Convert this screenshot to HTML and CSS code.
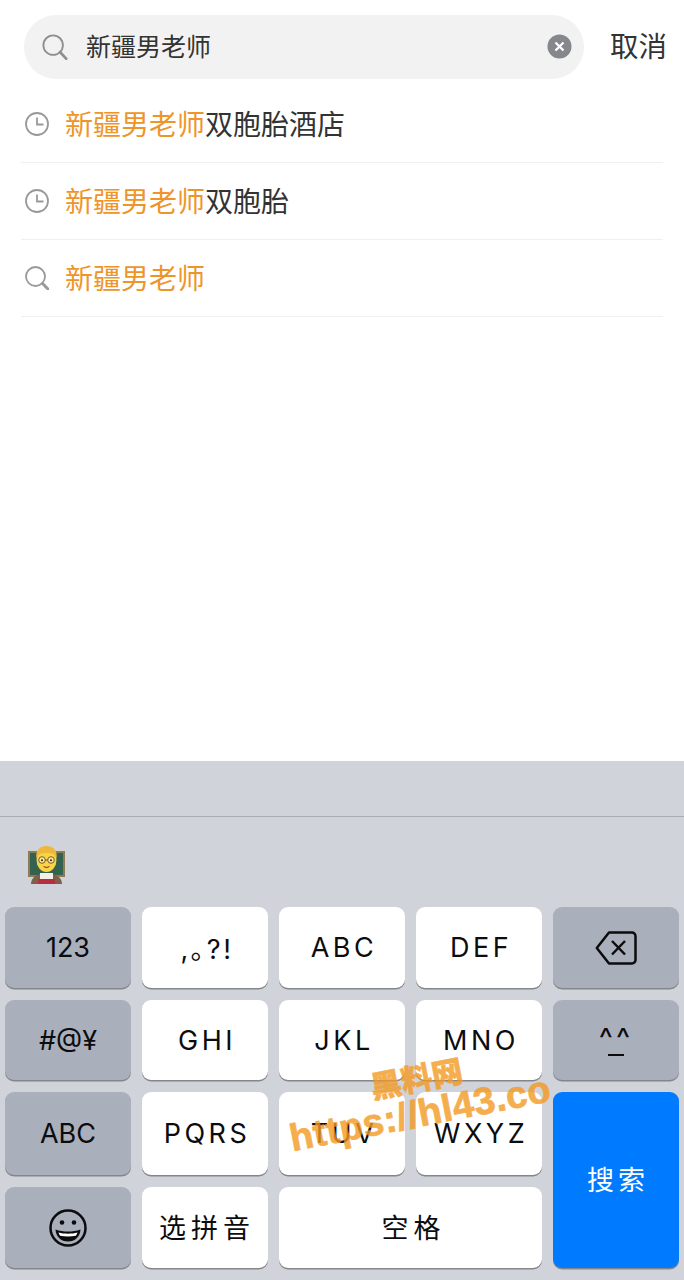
FILE: index.html
```html
<!DOCTYPE html>
<html lang="zh-CN">
<head>
    <meta charset="UTF-8">
    <meta name="viewport" content="width=device-width, initial-scale=1.0">
    <title>搜索</title>
    <link rel="stylesheet" href="styles.css">
</head>
<body>
    <div class="screen">
        <header class="search-head">
            <div class="search-bar">
                <svg class="search-icon" viewBox="0 0 28 28"><circle cx="12" cy="12" r="10.5"/><path class="handle" d="M19.5 19.5 26 26.5"/></svg>
                <span class="search-text">新疆男老师</span>
                <svg class="clear-icon" viewBox="0 0 26 26"><circle cx="13" cy="13" r="12.5"/><path d="M8.8 8.8 17.2 17.2M17.2 8.8 8.8 17.2"/></svg>
            </div>
            <span class="cancel">取消</span>
        </header>

        <ul class="results">
            <li class="result">
                <svg class="result-icon" viewBox="0 0 24 24"><circle cx="12" cy="12" r="11"/><path d="M12 5.5V12.5H18.5"/></svg>
                <span><em>新疆男老师</em>双胞胎酒店</span>
            </li>
            <li class="result">
                <svg class="result-icon" viewBox="0 0 24 24"><circle cx="12" cy="12" r="11"/><path d="M12 5.5V12.5H18.5"/></svg>
                <span><em>新疆男老师</em>双胞胎</span>
            </li>
            <li class="result">
                <svg class="result-icon" viewBox="0 0 24 24"><circle cx="10.5" cy="10.5" r="9.5"/><path class="handle" d="M17.5 17.5 23.5 23.5"/></svg>
                <span><em>新疆男老师</em></span>
            </li>
        </ul>

        <section class="keyboard">
            <div class="kb-top"></div>
            <div class="kb-candidates">
                <svg class="teacher" viewBox="0 0 38 38">
                    <rect x="0" y="5" width="37" height="26" fill="#8d7b55"/>
                    <rect x="2" y="7" width="33" height="22" fill="#35614f"/>
                    <path d="M3 38C3 31 10 27 18.500 27s15.500 4 15.500 11z" fill="#7d6047"/>
                    <path d="M12 38V27h13v11z" fill="#f3efe9"/>
                    <path d="M10 38V33h17v5z" fill="#b5303f"/>
                    <ellipse cx="18.500" cy="14" rx="10" ry="12" fill="#f8d548"/>
                    <path d="M8.500 13C7 4 12 0 18.500 0S30 4 28.500 13c-1-4-3-6-10-6S9.500 9 8.500 13z" fill="#eeb93a"/>
                    <circle cx="14" cy="14" r="3.300" fill="#fbe792" stroke="#6a4d22" stroke-width=".9"/>
                    <circle cx="23" cy="14" r="3.300" fill="#fbe792" stroke="#6a4d22" stroke-width=".9"/>
                    <path d="M17.300 14h2.400" stroke="#6a4d22" stroke-width=".9"/>
                    <circle cx="14" cy="14.200" r="1" fill="#3a2a14"/>
                    <circle cx="23" cy="14.200" r="1" fill="#3a2a14"/>
                    <path d="M15.500 20.500q3 1.500 6 0q-3 2.600-6 0z" fill="#a23a24" stroke="#a23a24" stroke-width=".6"/>
                </svg>
            </div>
            <div class="keys">
                <div class="key key-gray key-num">123</div>
                <div class="key key-punct">,｡?!</div>
                <div class="key">ABC</div>
                <div class="key">DEF</div>
                <div class="key key-gray">
                    <svg class="backspace" viewBox="0 0 42 34"><path d="M14 1.500H37a3.500 3.500 0 0 1 3.500 3.500V29a3.500 3.500 0 0 1-3.500 3.500H14L1.800 17z"/><path d="M17 10 30 23.500M30 10 17 23.500"/></svg>
                </div>

                <div class="key key-gray key-num">#@¥</div>
                <div class="key">GHI</div>
                <div class="key">JKL</div>
                <div class="key">MNO</div>
                <div class="key key-gray key-face"><span class="face">^^</span></div>

                <div class="key key-gray key-num">ABC</div>
                <div class="key">PQRS</div>
                <div class="key">TUV</div>
                <div class="key">WXYZ</div>
                <div class="key key-search">搜索</div>

                <div class="key key-gray">
                    <svg class="smile" viewBox="0 0 38 38"><circle cx="19" cy="19" r="17.500"/><circle class="fill" cx="13" cy="13.500" r="2.300"/><circle class="fill" cx="25" cy="13.500" r="2.300"/><path class="fill" d="M6.500 20.500c4 1.500 8 2 12.500 2s8.500-.5 12.500-2C31 28 26 32.500 19 32.500S7 28 6.500 20.500z"/><path class="teeth" d="M9.500 23.500c3 .8 6 1.200 9.500 1.200s6.500-.4 9.500-1.200c-.4 1.300-.9 2.300-1.600 3.200-2.500.5-5 .7-7.900.7s-5.400-.2-7.900-.7c-.7-.9-1.200-1.900-1.600-3.200z"/></svg>
                </div>
                <div class="key key-cjk">选拼音</div>
                <div class="key key-cjk key-space">空格</div>
            </div>
        </section>

        <div class="watermark">
            <div class="wm-name">黑料网</div>
            <div class="wm-url">https://hl43.co</div>
        </div>
    </div>
</body>
</html>
```

FILE: styles.css
```css
/* Reset some default styles */
body, ul, li {
    margin: 0;
    padding: 0;
}

body {
    font-family: "Noto Sans CJK SC", "Noto Sans", sans-serif;
    background-color: #fff;
    color: #333;
}

.screen {
    position: relative;
    display: flex;
    flex-direction: column;
    width: 684px;
    height: 1280px;
    overflow: hidden;
}

/* Search bar */
.search-head {
    display: flex;
    align-items: center;
    margin-top: 15px;
    padding-left: 24px;
}

.search-bar {
    display: flex;
    align-items: center;
    width: 560px;
    height: 64px;
    box-sizing: border-box;
    padding: 0 12px 0 18px;
    background-color: #f2f2f2;
    border-radius: 32px;
}

.search-icon {
    width: 26px;
    height: 26px;
    fill: none;
    stroke: #8f8f8f;
    stroke-width: 2;
}

.handle {
    stroke-width: 3;
    stroke-linecap: round;
}

.search-text {
    flex: 1;
    margin-left: 18px;
    padding-bottom: 4px;
    font-size: 25px;
    line-height: 34px;
}

.clear-icon {
    width: 25px;
    height: 25px;
    margin-top: -2px;
}

.clear-icon circle {
    fill: #85878c;
}

.clear-icon path {
    fill: none;
    stroke: #fff;
    stroke-width: 2.400;
}

.cancel {
    margin-left: 26px;
    padding-bottom: 4px;
    font-size: 28.500px;
    line-height: 38px;
}

/* Results */
.results {
    list-style: none;
    margin-top: 7px;
    padding: 0 21px;
}

.result {
    display: flex;
    align-items: center;
    height: 77px;
    box-sizing: border-box;
    padding-left: 4px;
    border-bottom: 1px solid #f0f0f0;
    font-size: 28px;
}

.result span {
    margin-top: -2px;
}

.result em {
    font-style: normal;
    color: #ee952a;
}

.result-icon {
    flex: none;
    width: 24px;
    height: 24px;
    margin-right: 16px;
    fill: none;
    stroke: #999;
    stroke-width: 1.800;
}

/* Keyboard */
.keyboard {
    margin-top: auto;
    height: 519px;
    background-color: #d0d3da;
    color: #0c0c0e;
}

.kb-top {
    height: 55px;
    border-bottom: 1px solid #a9abb2;
}

.kb-candidates {
    display: flex;
    align-items: center;
    height: 90px;
    box-sizing: border-box;
    padding: 5px 0 0 28px;
}

.teacher {
    width: 38px;
    height: 38px;
}

.keys {
    display: grid;
    grid-template-columns: repeat(5, 126px);
    grid-template-rows: 81px 80px 83px 81px;
    gap: 12px 11px;
    padding: 0 5px;
}

.key {
    display: flex;
    align-items: center;
    justify-content: center;
    padding-left: 4px;
    background-color: #fff;
    border-radius: 9px;
    box-shadow: 0 1.500px 0 #85868a;
    font-family: Inter, "Noto Sans CJK SC", sans-serif;
    font-size: 27px;
    letter-spacing: 3.500px;
}

.key-gray {
    padding-left: 0;
    background-color: #a9afbb;
}

.key-num {
    font-size: 27px;
    letter-spacing: 0;
}

.key-punct {
    letter-spacing: 2.500px;
}

.key-cjk {
    padding-bottom: 2px;
    font-family: "Noto Sans CJK SC", sans-serif;
    letter-spacing: 5px;
}

.key-space {
    grid-column: span 2;
    padding-left: 6px;
}

.key-search {
    grid-row: span 2;
    padding-bottom: 4px;
    background-color: #007aff;
    color: #fff;
    font-family: "Noto Sans CJK SC", sans-serif;
    letter-spacing: 4px;
}

.backspace {
    width: 42px;
    height: 34px;
    fill: none;
    stroke: #0c0c0e;
    stroke-width: 2.500;
    stroke-linejoin: round;
}

.key-face {
    font-size: 30px;
}

.face {
    padding: 0 1px;
    height: 32px;
    line-height: 28px;
    letter-spacing: 3px;
    background: linear-gradient(#0c0c0e, #0c0c0e) center bottom / 16px 2.500px no-repeat;
}

.smile {
    width: 38px;
    height: 38px;
    fill: none;
    stroke: #0c0c0e;
    stroke-width: 2.500;
}

.smile .fill {
    fill: #0c0c0e;
    stroke: none;
}

.smile .teeth {
    fill: #fff;
    stroke: none;
}

/* Watermark over the keyboard */
.watermark {
    position: absolute;
    left: 285px;
    top: 1060px;
    width: 270px;
    color: #f39a22;
    opacity: 0.8;
    font-family: "Liberation Sans", sans-serif;
    font-weight: bold;
    text-align: center;
    transform: rotate(-11deg);
    pointer-events: none;
}

.wm-name {
    font-family: "Noto Sans CJK SC", sans-serif;
    font-size: 31px;
    line-height: 33px;
    font-weight: 900;
    -webkit-text-stroke: 0.500px #f39a22;
}

.wm-url {
    margin-left: -6px;
    font-size: 38px;
    line-height: 40px;
    letter-spacing: 0.500px;
    white-space: nowrap;
    -webkit-text-stroke: 0.800px #f39a22;
}
```
